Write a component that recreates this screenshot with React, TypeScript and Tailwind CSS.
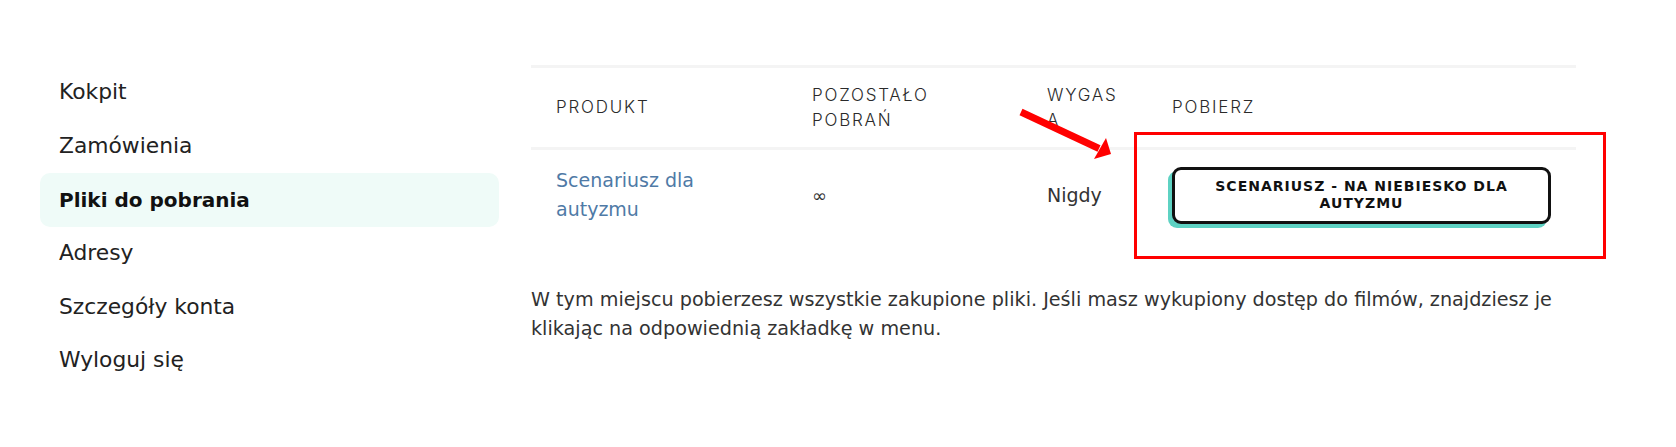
import React from "react";

const menu = [
  { label: "Kokpit", active: false },
  { label: "Zamówienia", active: false },
  { label: "Pliki do pobrania", active: true },
  { label: "Adresy", active: false },
  { label: "Szczegóły konta", active: false },
  { label: "Wyloguj się", active: false },
];

export default function App() {
  return (
    <div className="relative w-[1676px] h-[447px] bg-white font-['DejaVu_Sans',sans-serif] text-[#222]">
      <div className="flex pt-[65px] pl-[40px]">
        <nav className="w-[459px] flex flex-col pt-[1px]">
          {menu.map((m) => (
            <a
              key={m.label}
              className={
                m.active
                  ? "h-[53.6px] flex items-center pl-[19px] rounded-[10px] bg-[#effbf8] text-[20px] font-bold text-[#111]"
                  : "h-[53.6px] flex items-center pl-[19px] rounded-[10px] text-[21.8px] text-[#222]"
              }
            >
              {m.label}
            </a>
          ))}
        </nav>

        <div className="ml-[32px] w-[1045px]">
          <table className="w-full table-fixed border-collapse">
            <colgroup>
              <col className="w-[256px]" />
              <col className="w-[235px]" />
              <col className="w-[125px]" />
              <col />
            </colgroup>
            <thead>
              <tr className="h-[82px] border-t-[3px] border-b-[3px] border-[#f4f4f4]">
                {[
                  <>PRODUKT</>,
                  <>POZOSTAŁO<br />POBRAŃ</>,
                  <>WYGAS<br />A</>,
                  <>POBIERZ</>,
                ].map((h, i) => (
                  <th
                    key={i}
                    className="px-[25px] text-left align-middle font-['Inter',sans-serif] font-light text-[17px] leading-[25px] tracking-[1.8px] text-[#2a2a2a]"
                  >
                    {h}
                  </th>
                ))}
              </tr>
            </thead>
            <tbody>
              <tr>
                <td className="px-[25px] py-[16px] align-middle text-[19px] leading-[29px] text-[#4f7aa6]">
                  Scenariusz dla<br />autyzmu
                </td>
                <td className="px-[25px] align-middle text-[18px] text-[#333]">∞</td>
                <td className="px-[25px] align-middle text-[19px] text-[#333]">Nigdy</td>
                <td className="px-[25px] align-middle">
                  <button className="w-full h-[57px] bg-white border-[3px] border-[#111] rounded-[9px] shadow-[-4px_4px_0_#5ed2c3] flex flex-col items-center justify-center text-[14px] leading-[17px] font-bold tracking-[1px] text-[#111]">
                    <span>SCENARIUSZ - NA NIEBIESKO DLA</span>
                    <span>AUTYZMU</span>
                  </button>
                </td>
              </tr>
            </tbody>
          </table>
          <p className="mt-[45px] text-[19.2px] leading-[29px] text-[#333]">
            W tym miejscu pobierzesz wszystkie zakupione pliki. Jeśli masz wykupiony dostęp do filmów, znajdziesz je
            <br />
            klikając na odpowiednią zakładkę w menu.
          </p>
        </div>
      </div>

      {/* annotation: red frame */}
      <div className="absolute left-[1134px] top-[132px] w-[472px] h-[127px] border-[3px] border-[#ff0000]" />

      {/* annotation: red arrow */}
      <svg className="absolute left-[1010px] top-[100px]" width="110" height="70" viewBox="1010 100 110 70">
        <line x1="1021" y1="112" x2="1099" y2="148.5" stroke="#ff0000" strokeWidth="7" />
        <polygon points="1106,138 1111,154 1094,159" fill="#ff0000" />
      </svg>
    </div>
  );
}
